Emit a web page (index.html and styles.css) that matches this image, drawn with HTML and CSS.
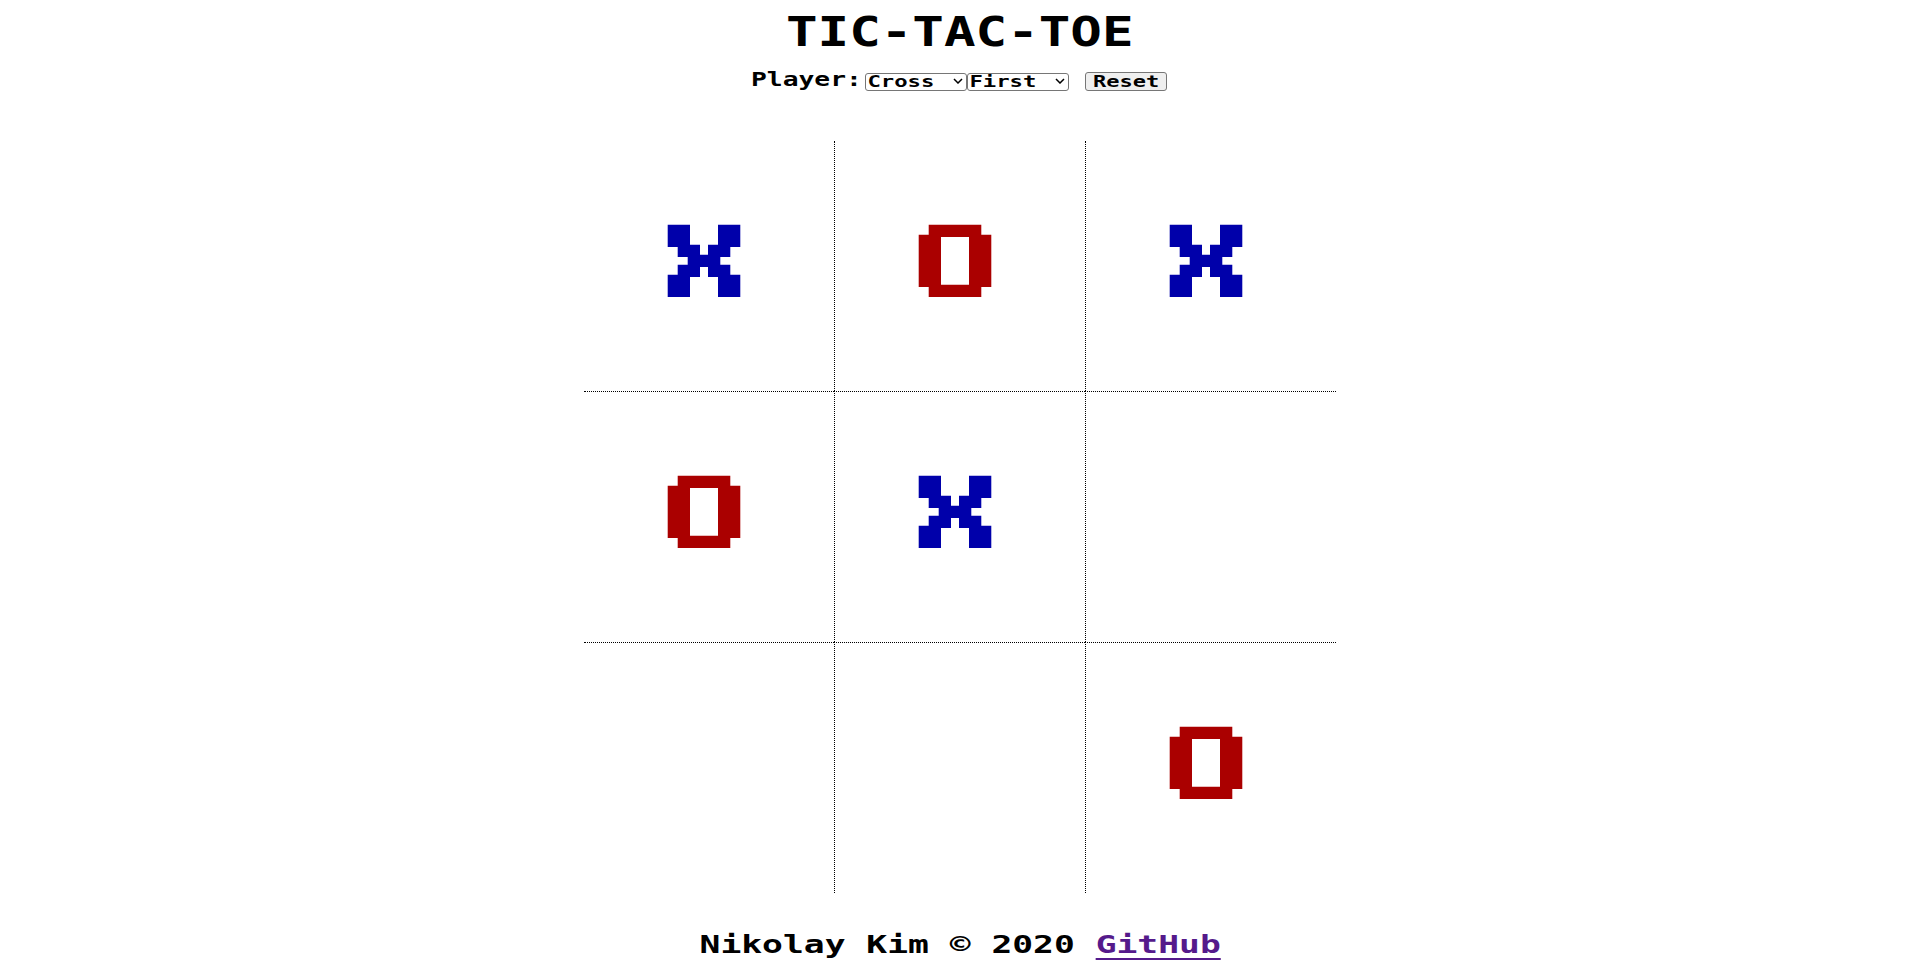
FILE: index.html
```html
<!DOCTYPE html>
<html lang="en">
<head>
    <meta charset="UTF-8">
    <meta name="viewport" content="width=device-width, initial-scale=1.0">
    <title>Tic-Tac-Toe</title>
    <link rel="stylesheet" href="styles.css">
</head>
<body>
    <h1 class="title"><span class="title-text">TIC-TAC-TOE</span></h1>

    <!-- player controls -->
    <div class="controls">
        <label class="player-label" for="player">Player:</label>
        <div class="picker">
            <select class="picker-select" id="player">
                <option>Cross</option>
                <option>Circle</option>
            </select>
            <svg class="chevron" viewBox="0 0 10 6"><polyline points="1,1 5,5 9,1"/></svg>
        </div>
        <div class="picker">
            <select class="picker-select" id="order">
                <option>First</option>
                <option>Second</option>
            </select>
            <svg class="chevron" viewBox="0 0 10 6"><polyline points="1,1 5,5 9,1"/></svg>
        </div>
        <button class="reset"><span class="reset-text">Reset</span></button>
    </div>

    <!-- board -->
    <div class="board">
        <div class="cell">
            <svg class="mark cross" viewBox="0 0 74 74" role="img" aria-label="Cross"><polygon points="0.7,0.7 23,0.7 23,20.7 33,20.7 33,30.7 41,30.7 41,20.7 51,20.7 51,0.7 73.3,0.7 73.3,23 63.3,23 63.3,33 53.3,33 53.3,40.7 63.3,40.7 63.3,50.7 73.3,50.7 73.3,73 51,73 51,53 41,53 41,43 33,43 33,53 23,53 23,73 0.7,73 0.7,50.7 10.7,50.7 10.7,40.7 20.7,40.7 20.7,33 10.7,33 10.7,23 0.7,23"/></svg>
        </div>
        <div class="cell">
            <svg class="mark circle" viewBox="0 0 74 74" role="img" aria-label="Circle"><path fill-rule="evenodd" d="M10.7 0.7H63.3V10.7H73.3V63H63.3V73H10.7V63H0.7V10.7H10.7ZM23 13V60.7H51V13Z"/></svg>
        </div>
        <div class="cell">
            <svg class="mark cross" viewBox="0 0 74 74" role="img" aria-label="Cross"><polygon points="0.7,0.7 23,0.7 23,20.7 33,20.7 33,30.7 41,30.7 41,20.7 51,20.7 51,0.7 73.3,0.7 73.3,23 63.3,23 63.3,33 53.3,33 53.3,40.7 63.3,40.7 63.3,50.7 73.3,50.7 73.3,73 51,73 51,53 41,53 41,43 33,43 33,53 23,53 23,73 0.7,73 0.7,50.7 10.7,50.7 10.7,40.7 20.7,40.7 20.7,33 10.7,33 10.7,23 0.7,23"/></svg>
        </div>
        <div class="cell">
            <svg class="mark circle" viewBox="0 0 74 74" role="img" aria-label="Circle"><path fill-rule="evenodd" d="M10.7 0.7H63.3V10.7H73.3V63H63.3V73H10.7V63H0.7V10.7H10.7ZM23 13V60.7H51V13Z"/></svg>
        </div>
        <div class="cell">
            <svg class="mark cross" viewBox="0 0 74 74" role="img" aria-label="Cross"><polygon points="0.7,0.7 23,0.7 23,20.7 33,20.7 33,30.7 41,30.7 41,20.7 51,20.7 51,0.7 73.3,0.7 73.3,23 63.3,23 63.3,33 53.3,33 53.3,40.7 63.3,40.7 63.3,50.7 73.3,50.7 73.3,73 51,73 51,53 41,53 41,43 33,43 33,53 23,53 23,73 0.7,73 0.7,50.7 10.7,50.7 10.7,40.7 20.7,40.7 20.7,33 10.7,33 10.7,23 0.7,23"/></svg>
        </div>
        <div class="cell"></div>
        <div class="cell"></div>
        <div class="cell"></div>
        <div class="cell">
            <svg class="mark circle" viewBox="0 0 74 74" role="img" aria-label="Circle"><path fill-rule="evenodd" d="M10.7 0.7H63.3V10.7H73.3V63H63.3V73H10.7V63H0.7V10.7H10.7ZM23 13V60.7H51V13Z"/></svg>
        </div>
    </div>

    <footer class="credits"><span class="credits-text">Nikolay Kim © 2020 <a class="credits-link" href="#">GitHub</a></span></footer>
</body>
</html>
```

FILE: styles.css
```css
body {
    font-family: "DejaVu Sans Mono", "Liberation Mono", monospace;
    font-weight: bold;
    margin: 0;
    color: #000;
    background-color: #fff;
}
/* the scaleX calls widen the mono glyphs to the page's square letter shape */
.title {
    margin: 0;
    height: 64px;
    font-size: 41px;
    line-height: 64px;
    text-align: center;
}
.title-text {
    display: inline-block;
    transform: scaleX(1.28);
}
.controls {
    display: flex;
    justify-content: center;
    align-items: center;
    height: 19px;
    margin-top: 8px;
}
.player-label {
    width: 114px;
    margin-left: -1px;
    margin-top: -4px;
    font-size: 19px;
    line-height: 19px;
    transform: scaleX(1.385);
    transform-origin: left center;
}
.picker {
    position: relative;
    box-sizing: border-box;
    width: 102px;
    height: 18px;
    border: 1px solid #767676;
    border-radius: 3px;
    overflow: hidden;
}
.picker-select {
    display: block;
    width: 72px;
    height: 16px;
    padding: 0 0 0 1px;
    border: none;
    outline: none;
    appearance: none;
    font-family: inherit;
    font-weight: bold;
    font-size: 16px;
    line-height: 16px;
    color: #000;
    background: transparent;
    transform: scaleX(1.39);
    transform-origin: left center;
}
.chevron {
    position: absolute;
    top: 4px;
    right: 3px;
    width: 10px;
    height: 6px;
    fill: none;
    stroke: #000;
    stroke-width: 1.5;
}
.reset {
    box-sizing: border-box;
    width: 82px;
    height: 19px;
    margin-left: 16px;
    margin-right: 1px;
    padding: 0;
    font-family: inherit;
    font-weight: bold;
    font-size: 16px;
    line-height: 17px;
    color: #000;
    background-color: #efefef;
    border: 1px solid #767676;
    border-radius: 3px;
}
.reset-text {
    display: inline-block;
    transform: scaleX(1.375);
}
.board {
    display: grid;
    grid-template-columns: 250px 251px 251px;
    grid-template-rows: 250px 251px 251px;
    width: 752px;
    margin: 50px auto 0;
}
.cell {
    display: flex;
    justify-content: center;
    align-items: center;
    padding: 0 10px 10px 0;
    border-left: 1px dotted #000;
    border-top: 1px dotted #000;
}
.cell:nth-child(3n+1) {
    border-left: none;
}
.cell:nth-child(-n+3) {
    border-top: none;
}
.mark {
    width: 74px;
    height: 74px;
}
.cross {
    fill: #0000aa;
}
.circle {
    fill: #aa0000;
}
.credits {
    height: 41px;
    margin-top: 31px;
    font-size: 25px;
    line-height: 41px;
    text-align: center;
}
.credits-text {
    display: inline-block;
    transform: scaleX(1.385);
}
.credits-link {
    color: #551a8b;
    text-decoration-thickness: 2px;
    text-underline-offset: 5px;
}
```
